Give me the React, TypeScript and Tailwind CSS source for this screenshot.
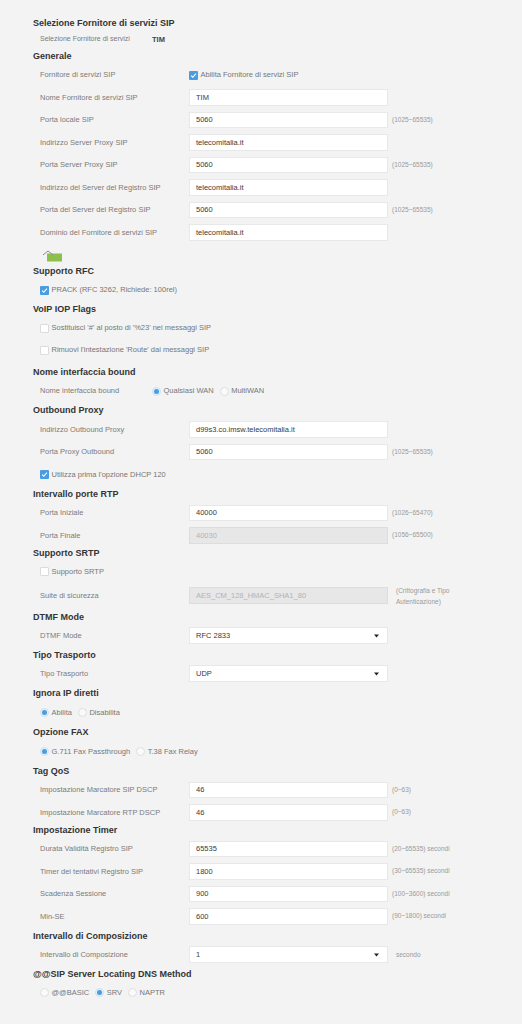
import React from "react";

const labelCls = "shrink-0 text-[7.5px] text-[#7b7b7b]";

function Heading({ children, className = "" }: { children: React.ReactNode; className?: string }) {
  return (
    <h2 className={`h-[16px] pl-[33px] text-[9px] font-bold leading-[16px] text-[#333] ${className}`}>
      {children}
    </h2>
  );
}

function Check({ on }: { on?: boolean }) {
  if (on) {
    return (
      <span className="flex h-[9px] w-[9px] shrink-0 items-center justify-center rounded-[1px] bg-[#4a9de0]">
        <svg width="7" height="7" viewBox="0 0 8 8" fill="none">
          <path d="M1.3 4.2 3.2 6 6.8 1.8" stroke="#fff" strokeWidth="1.3" />
        </svg>
      </span>
    );
  }
  return <span className="h-[9px] w-[9px] shrink-0 rounded-[1px] border border-[#dcdcdc] bg-white" />;
}

function Radio({ on }: { on?: boolean }) {
  if (on) {
    return (
      <span className="flex h-[9px] w-[9px] shrink-0 items-center justify-center rounded-full border border-[#cfe2f3] bg-[#e3eef8]">
        <span className="h-[5px] w-[5px] rounded-full bg-[#4a9de0]" />
      </span>
    );
  }
  return <span className="h-[9px] w-[9px] shrink-0 rounded-full border border-[#dedede] bg-[#fafafa]" />;
}

function RadioGroup({ items, selected }: { items: string[]; selected: number }) {
  return (
    <div className="flex items-center gap-[6px]">
      {items.map((it, i) => (
        <span key={it} className="flex items-center gap-[2.5px]">
          <Radio on={i === selected} />
          <span className="text-[7.5px] text-[#777]">{it}</span>
        </span>
      ))}
    </div>
  );
}

function InputRow({
  label,
  value,
  hint,
  disabled,
}: {
  label: string;
  value: string;
  hint?: string;
  disabled?: boolean;
}) {
  return (
    <div className="flex h-[22.5px] items-center pl-[40px]">
      <span className={`${labelCls} w-[149px]`}>{label}</span>
      <input
        readOnly
        value={value}
        className={`h-[16.5px] w-[199px] shrink-0 border px-[6px] text-[7.5px] outline-none ${
          disabled ? "border-[#dddddd] bg-[#e7e7e7] text-[#b3b3b3]" : "border-[#e8e8e8] bg-white text-[#3a3a3a]"
        }`}
      />
      {hint && <span className="ml-[4px] text-[6.5px] text-[#9a9a9a]">{hint}</span>}
    </div>
  );
}

function SelectRow({ label, value, hint }: { label: string; value: string; hint?: string }) {
  return (
    <div className="flex h-[22px] items-center pl-[40px]">
      <span className={`${labelCls} w-[149px]`}>{label}</span>
      <div className="flex h-[16.5px] w-[199px] shrink-0 items-center justify-between border border-[#e8e8e8] bg-white pl-[6px] pr-[8px]">
        <span className="text-[7.5px] text-[#3a3a3a]">{value}</span>
        <svg width="5" height="4" viewBox="0 0 5 4">
          <path d="M0 0.5h5L2.5 3.6z" fill="#222" />
        </svg>
      </div>
      {hint && <span className="ml-[8px] text-[6.5px] text-[#9a9a9a]">{hint}</span>}
    </div>
  );
}

function CheckRow({ label, on, className = "h-[22px]" }: { label: string; on?: boolean; className?: string }) {
  return (
    <div className={`flex items-center gap-[2.5px] pl-[40px] ${className}`}>
      <Check on={on} />
      <span className="text-[7.5px] text-[#777]">{label}</span>
    </div>
  );
}

export default function App() {
  return (
    <div className="min-h-[1024px] w-full bg-[#f3f3f3] pt-[15px] font-['Liberation_Sans',Arial,sans-serif]">
      <Heading>Selezione Fornitore di servizi SIP</Heading>
      <div className="flex h-[17px] items-center pl-[40px]">
        <span className="w-[112px] shrink-0 text-[7px] text-[#7b7b7b]">Selezione Fornitore di servizi</span>
        <span className="text-[7.5px] font-bold text-[#444]">TIM</span>
      </div>

      <Heading>Generale</Heading>
      <div className="flex h-[22px] items-center pl-[40px]">
        <span className={`${labelCls} w-[149px]`}>Fornitore di servizi SIP</span>
        <span className="flex items-center gap-[2.5px]">
          <Check on />
          <span className="text-[7.5px] text-[#777]">Abilita Fornitore di servizi SIP</span>
        </span>
      </div>
      <InputRow label="Nome Fornitore di servizi SIP" value="TIM" />
      <InputRow label="Porta locale SIP" value="5060" hint="(1025~65535)" />
      <InputRow label="Indirizzo Server Proxy SIP" value="telecomitalia.it" />
      <InputRow label="Porta Server Proxy SIP" value="5060" hint="(1025~65535)" />
      <InputRow label="Indirizzo del Server del Registro SIP" value="telecomitalia.it" />
      <InputRow label="Porta del Server del Registro SIP" value="5060" hint="(1025~65535)" />
      <InputRow label="Dominio del Fornitore di servizi SIP" value="telecomitalia.it" />

      <div className="h-[19.5px] pl-[42px] pt-[6px]">
        <svg width="22" height="12" viewBox="0 0 22 12">
          <rect x="5" y="3.5" width="15" height="8" fill="#8cc04b" />
          <path d="M1 5 6 1 11 5" fill="none" stroke="#8a8a8a" strokeWidth="1" />
        </svg>
      </div>

      <Heading>Supporto RFC</Heading>
      <CheckRow on label="PRACK (RFC 3262, Richiede: 100rel)" />

      <Heading>VoIP IOP Flags</Heading>
      <CheckRow label="Sostituisci '#' al posto di '%23' nei messaggi SIP" />
      <CheckRow label="Rimuovi l'intestazione 'Route' dai messaggi SIP" className="mb-[3px] h-[22px]" />

      <Heading>Nome interfaccia bound</Heading>
      <div className="flex h-[22px] items-center pl-[40px]">
        <span className="w-[112px] shrink-0 text-[7.5px] text-[#7b7b7b]">Nome interfaccia bound</span>
        <RadioGroup items={["Qualsiasi WAN", "MultiWAN"]} selected={0} />
      </div>

      <Heading>Outbound Proxy</Heading>
      <InputRow label="Indirizzo Outbound Proxy" value="d99s3.co.imsw.telecomitalia.it" />
      <InputRow label="Porta Proxy Outbound" value="5060" hint="(1025~65535)" />
      <CheckRow on label="Utilizza prima l'opzione DHCP 120" className="h-[22.5px]" />

      <Heading>Intervallo porte RTP</Heading>
      <InputRow label="Porta Iniziale" value="40000" hint="(1026~65470)" />
      <InputRow label="Porta Finale" value="40030" hint="(1056~65500)" disabled />

      <Heading className="-mt-[2px]">Supporto SRTP</Heading>
      <CheckRow label="Supporto SRTP" />
      <div className="flex h-[26px] items-center pl-[40px]">
        <span className={`${labelCls} w-[149px]`}>Suite di sicurezza</span>
        <input
          readOnly
          value="AES_CM_128_HMAC_SHA1_80"
          className="h-[16.5px] w-[199px] shrink-0 border border-[#dddddd] bg-[#e7e7e7] px-[6px] text-[7.5px] text-[#b3b3b3] outline-none"
        />
        <span className="ml-[8px] text-[6.5px] leading-[11px] text-[#9a9a9a]">
          (Crittografia e Tipo
          <br />
          Autenticazione)
        </span>
      </div>

      <Heading>DTMF Mode</Heading>
      <SelectRow label="DTMF Mode" value="RFC 2833" />

      <Heading>Tipo Trasporto</Heading>
      <SelectRow label="Tipo Trasporto" value="UDP" />

      <Heading>Ignora IP diretti</Heading>
      <div className="flex h-[23.5px] items-center pl-[40px]">
        <RadioGroup items={["Abilita", "Disabilita"]} selected={0} />
      </div>

      <Heading>Opzione FAX</Heading>
      <div className="flex h-[22.5px] items-center pl-[40px]">
        <RadioGroup items={["G.711 Fax Passthrough", "T.38 Fax Relay"]} selected={0} />
      </div>

      <Heading>Tag QoS</Heading>
      <InputRow label="Impostazione Marcatore SIP DSCP" value="46" hint="(0~63)" />
      <InputRow label="Impostazione Marcatore RTP DSCP" value="46" hint="(0~63)" />

      <Heading className="-mt-[2px]">Impostazione Timer</Heading>
      <InputRow label="Durata Validità Registro SIP" value="65535" hint="(20~65535) secondi" />
      <InputRow label="Timer dei tentativi Registro SIP" value="1800" hint="(30~65535) secondi" />
      <InputRow label="Scadenza Sessione" value="900" hint="(100~3600) secondi" />
      <InputRow label="Min-SE" value="600" hint="(90~1800) secondi" />

      <Heading>Intervallo di Composizione</Heading>
      <SelectRow label="Intervallo di Composizione" value="1" hint="secondo" />

      <Heading>@@SIP Server Locating DNS Method</Heading>
      <div className="flex h-[22.5px] items-center pl-[40px]">
        <RadioGroup items={["@@BASIC", "SRV", "NAPTR"]} selected={1} />
      </div>
    </div>
  );
}
